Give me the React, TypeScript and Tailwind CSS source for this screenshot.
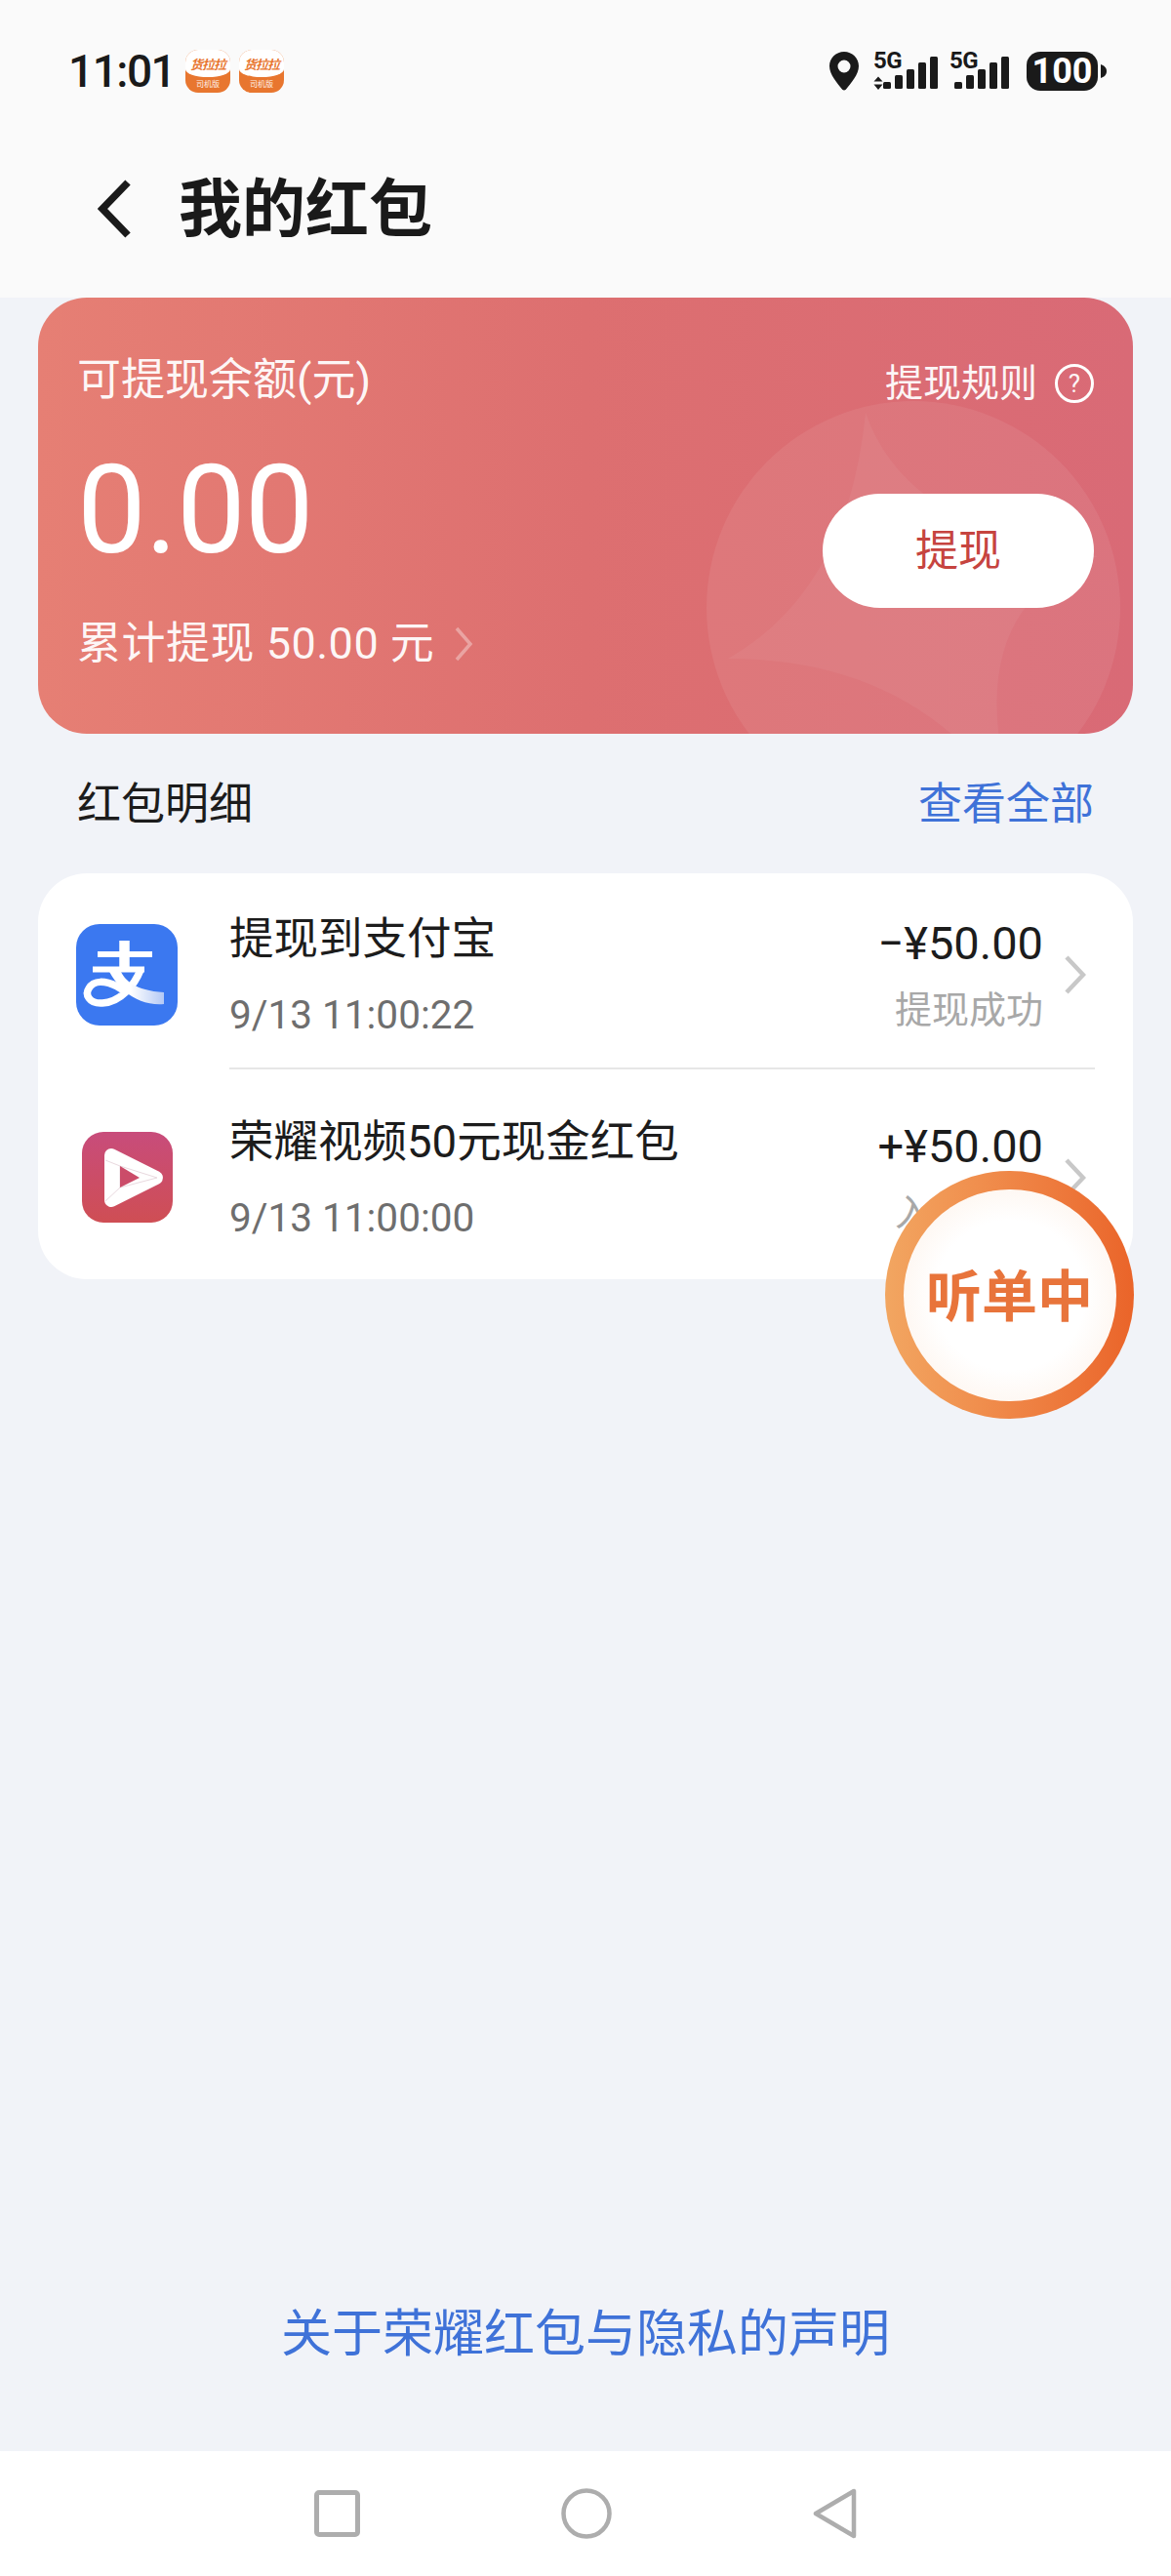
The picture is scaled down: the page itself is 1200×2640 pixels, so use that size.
const font = "font-['Roboto','Noto_Sans_CJK_SC',sans-serif]";

function AppBadge() {
  return (
    <div className="relative h-[44px] w-[46px] overflow-hidden rounded-[13px] bg-[#e8762f]">
      <div className="flex h-[28px] items-center justify-center rounded-b-[50%_8px] bg-white pt-[2px] text-[13px] font-bold italic leading-none tracking-[-1px] text-[#e8762f]">货拉拉</div>
      <div className="flex h-[16px] items-center justify-center text-[8px] leading-none text-white/90">司机版</div>
    </div>
  );
}

function Signal({ data }: { data?: boolean }) {
  return (
    <div className={`relative h-[40px] ${data ? "w-[66px]" : "w-[61px]"}`}>
      <span className="absolute left-0 top-[-3px] text-[24px] font-bold leading-[24px] tracking-[-0.5px] text-[#1a1a1a]">5G</span>
      <svg width={data ? 66 : 61} height="40" viewBox={data ? "0 0 66 40" : "5 0 61 40"} fill="#1a1a1a" className="absolute left-0 top-0">
        {data && <path d="M5 25.500l4.500 5h-9zM5 39l-4.500-5.500h9z" />}
        <rect x="10" y="31" width="8" height="7" rx="1.500" />
        <rect x="22" y="24" width="8" height="14" rx="1.500" />
        <rect x="34" y="18" width="8" height="20" rx="1.500" />
        <rect x="46" y="11" width="8" height="27" rx="1.500" />
        <rect x="58" y="5" width="8" height="33" rx="1.500" />
      </svg>
    </div>
  );
}

function StatusBar() {
  return (
    <div className="flex h-[146px] items-center justify-between pl-[70px] pr-[66px]">
      <div className="flex items-center">
        <span className="w-[120px] text-[46px] font-medium leading-none tracking-[-1.500px] text-[#1a1a1a]">11:01</span>
        <div className="flex gap-[9px]">
          <AppBadge />
          <AppBadge />
        </div>
      </div>
      <div className="flex items-center">
        <svg width="30" height="40" viewBox="0 0 30 40">
          <path fillRule="evenodd" fill="#1a1a1a" d="M15 0c8.300 0 15 6.600 15 14.800 0 8.700-8 17.500-13.200 23.900-.9 1.100-2.700 1.100-3.600 0C8 32.300 0 23.500 0 14.800 0 6.600 6.700 0 15 0zm0 8.500a6.500 6.500 0 1 0 0 13 6.500 6.500 0 0 0 0-13z" />
        </svg>
        <div className="ml-[15px]"><Signal data /></div>
        <div className="ml-[12px]"><Signal /></div>
        <div className="ml-[18px] flex h-[40px] w-[73px] items-center justify-center rounded-[14px] bg-[#1a1a1a] text-[36px] font-bold leading-none text-white">100</div>
        <svg width="6" height="14" viewBox="0 0 6 14" className="ml-[3px]"><path d="M0 0c3 1 6 3 6 7s-3 6-6 7z" fill="#1a1a1a" /></svg>
      </div>
    </div>
  );
}

function BalanceCard() {
  return (
    <div className="relative flex h-[447px] justify-between overflow-hidden rounded-[50px] bg-linear-to-r from-[#e67f74] via-[#dd6f70] to-[#d96a76] pl-[40px] pr-[40px]">
      <svg className="absolute left-0 top-0" width="1122" height="447" viewBox="0 0 1122 447">
        <circle cx="897" cy="318" r="212" fill="#ffffff" fillOpacity="0.07" />
        <path d="M848 118Q890 240 1086 265 940 320 1000 520 900 370 707 370 830 300 848 118z" fill="#ffffff" fillOpacity="0.05" />
      </svg>
      <div className="relative flex flex-col pt-[55px] text-white">
        <div className="text-[45px] leading-[60px] text-white/95">可提现余额(元)</div>
        <div className="mt-[38px] text-[126px] font-normal leading-[130px] tracking-[-1px]">0.00</div>
        <div className="mt-[42px] flex items-center text-[45px] leading-[60px] tracking-[0.5px] text-white/95">
          累计提现 50.00 元
          <svg width="20" height="38" viewBox="0 0 20 38" className="ml-[20px]"><path d="M3 3l14 16L3 35" fill="none" stroke="#ffffff" strokeOpacity="0.35" strokeWidth="3.500" /></svg>
        </div>
      </div>
      <div className="relative flex flex-col items-end pt-[58px]">
        <div className="flex items-center text-[39px] leading-[60px] text-white/95">
          提现规则
          <span className="ml-[18px] flex h-[40px] w-[40px] items-center justify-center rounded-full border-[3px] border-white text-[26px] leading-none">?</span>
        </div>
        <div className="mt-[83px] flex h-[117px] w-[278px] items-center justify-center rounded-full bg-white text-[44px] text-[#c6443f]">提现</div>
      </div>
    </div>
  );
}

function AlipayIcon() {
  return (
    <svg width="104" height="104" viewBox="0 0 104 104">
      <defs>
        <linearGradient id="ribbon" x1="0" y1="0" x2="1" y2="0">
          <stop offset="0.4" stopColor="#ffffff" />
          <stop offset="1" stopColor="#b4c9f5" />
        </linearGradient>
      </defs>
      <rect width="104" height="104" rx="24" fill="#3b78f0" />
      <path d="M22 31h56M17 46.500h53" stroke="#ffffff" strokeWidth="6" fill="none" />
      <path d="M49.500 17v30" stroke="#ffffff" strokeWidth="10.500" fill="none" />
      <path d="M66 47C60 62 46 80 27 81 13 82 9 72 13 66 18 57 30 58 42 64L52 70" stroke="#ffffff" strokeWidth="7.500" fill="none" />
      <path d="M45 47C50 58 60 68 90 70L90 82C65 84 45 70 33 47z" fill="url(#ribbon)" />
    </svg>
  );
}

function VideoIcon() {
  return (
    <svg width="93" height="93" viewBox="0 0 93 93">
      <defs>
        <linearGradient id="video" x1="0" y1="0" x2="0" y2="1">
          <stop offset="0" stopColor="#c84c7b" />
          <stop offset="1" stopColor="#cf4e54" />
        </linearGradient>
      </defs>
      <rect width="93" height="93" rx="22" fill="url(#video)" />
      <path d="M30 24L76 47 30 70z" fill="#ffffff" stroke="#ffffff" strokeWidth="14" strokeLinejoin="round" />
      <path d="M24 29l15 6v22l-15 14M39 35l38 12M39 57l38-10" fill="none" stroke="#e9d9df" strokeWidth="1" />
      <path d="M39 35L59 47 39 57z" fill="#cb4c69" />
    </svg>
  );
}

function Chevron() {
  return (
    <svg width="22" height="40" viewBox="0 0 22 40" className="ml-[22px] shrink-0">
      <path d="M2 2l17 18L2 38" fill="none" stroke="#c8c8c8" strokeWidth="4.500" />
    </svg>
  );
}

function DetailRow({ icon, title, time, amount, state, className }: { icon: React.ReactNode; title: string; time: string; amount: string; state: string; className: string }) {
  return (
    <div className={`flex items-center pl-[39px] pr-[48px] ${className}`}>
      <div className="flex w-[104px] shrink-0 justify-center">{icon}</div>
      <div className="ml-[53px] flex-1">
        <div className="text-[45.500px] leading-[60px] text-[#1c1c1c]">{title}</div>
        <div className="mt-[22px] text-[40.500px] leading-[50px] text-[#6e6e6e]">{time}</div>
      </div>
      <div className="flex flex-col items-end">
        <div className="text-[47px] leading-[60px] text-[#1c1c1c]">{amount}</div>
        <div className="mt-[13px] text-[38px] leading-[50px] text-[#a8a8a8]">{state}</div>
      </div>
      <Chevron />
    </div>
  );
}

export default function App() {
  return (
    <div className={`relative flex h-[2640px] w-[1200px] flex-col overflow-hidden bg-[#f1f3f8] ${font}`}>
      <header className="bg-[#fafafa] pb-[23px]">
        <StatusBar />
        <div className="flex h-[136px] items-center pl-[100px]">
          <svg width="34" height="60" viewBox="0 0 34 60"><path d="M31 3L5 30l26 27" fill="none" stroke="#1a1a1a" strokeWidth="7.500" /></svg>
          <h1 className="ml-[49px] pt-[2px] text-[65px] font-bold leading-none text-[#1a1a1a]">我的红包</h1>
        </div>
      </header>

      <main className="flex flex-1 flex-col px-[39px]">
        <BalanceCard />
        <div className="flex h-[143px] items-center justify-between pl-[40px] pr-[40px] pt-[2px]">
          <span className="text-[45px] text-[#1c1c1c]">红包明细</span>
          <span className="text-[45px] text-[#3f72d8]">查看全部</span>
        </div>
        <div className="rounded-[50px] bg-white">
          <DetailRow className="h-[199px] pt-[8px]" icon={<AlipayIcon />} title="提现到支付宝" time="9/13 11:00:22" amount="−¥50.00" state="提现成功" />
          <div className="ml-[196px] mr-[39px] h-[2px] bg-[#e6e6e6]" />
          <DetailRow className="h-[215px] pt-[6px]" icon={<VideoIcon />} title="荣耀视频50元现金红包" time="9/13 11:00:00" amount="+¥50.00" state="入账成功" />
        </div>
        <div className="mt-auto pb-[84px] text-center text-[52px] leading-[70px] text-[#3f72d8]">关于荣耀红包与隐私的声明</div>
      </main>

      <nav className="flex h-[128px] items-center justify-center gap-[206px] bg-white">
        <svg width="47" height="48" viewBox="0 0 47 48"><rect x="2.500" y="2.500" width="42" height="43" rx="2.500" fill="none" stroke="#adadad" strokeWidth="5" /></svg>
        <svg width="52" height="52" viewBox="0 0 52 52"><circle cx="26" cy="26" r="23.500" fill="none" stroke="#adadad" strokeWidth="4.500" /></svg>
        <svg width="45" height="52" viewBox="0 0 45 52"><path d="M42 3v46L3 26z" fill="none" stroke="#adadad" strokeWidth="4.500" strokeLinejoin="round" /></svg>
      </nav>

      <div className="absolute left-[907px] top-[1200px] flex h-[254px] w-[255px] items-center justify-center rounded-full bg-linear-to-r from-[#f2a661] to-[#ea6429]">
        <div className="flex h-[217px] w-[218px] items-center justify-center rounded-full bg-[radial-gradient(circle,#ffffff_50%,#fdeee2_100%)] pt-[5px] text-[57px] font-bold leading-none text-[#e8743b]">听单中</div>
      </div>
    </div>
  );
}
